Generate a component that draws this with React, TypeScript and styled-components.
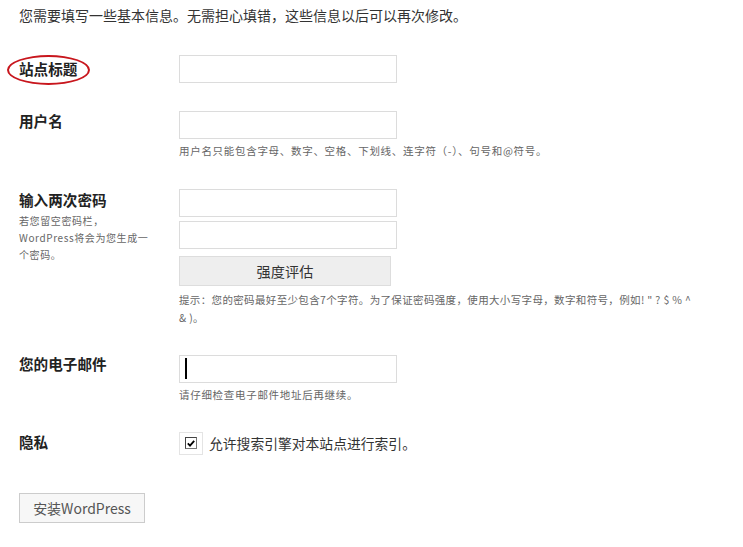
import styled, { createGlobalStyle } from 'styled-components';

const GlobalStyle = createGlobalStyle`
  html, body {
    margin: 0;
    padding: 0;
    background: #fff;
  }
  body {
    font-family: 'Noto Sans CJK SC', 'Noto Sans', sans-serif;
    color: #333;
  }
`;

const Page = styled.div`
  padding: 5px 0 0 19px;
  width: 724px;
`;

const Intro = styled.p`
  margin: 0;
  font-size: 14px;
  line-height: 20px;
  color: #333;
`;

const Form = styled.div`
  margin-top: 30px;
  display: flex;
  flex-direction: column;
`;

const Row = styled.div<{ gap: number }>`
  display: grid;
  grid-template-columns: 160px 1fr;
  margin-bottom: ${(props) => props.gap}px;
`;

const LabelCell = styled.div`
  position: relative;
  display: flex;
  flex-direction: column;
`;

const Label = styled.label<{ top: number }>`
  font-size: 14.6px;
  font-weight: 700;
  line-height: 20px;
  color: #222;
  padding-top: ${(props) => props.top}px;
`;

const Circled = styled.span`
  position: absolute;
  left: -12px;
  top: 0;
  width: 79px;
  height: 26px;
  border: 2px solid #c8161d;
  border-radius: 50%;
`;

const Note = styled.div`
  font-size: 10px;
  line-height: 17px;
  color: #666;
  letter-spacing: 0.6px;
  width: 135px;
  margin-top: 2px;
`;

const Field = styled.div`
  display: flex;
  flex-direction: column;
  align-items: flex-start;
`;

const InputWrap = styled.div`
  position: relative;
`;

const TextInput = styled.input<{ spaced?: boolean }>`
  box-sizing: border-box;
  width: 218px;
  height: 28px;
  border: 1px solid #dcdcdc;
  background: #fff;
  outline: none;
  margin: 0 0 ${(props) => (props.spaced ? 4 : 0)}px 0;
  padding: 0 6px;
`;

const Caret = styled.span`
  position: absolute;
  left: 6px;
  top: 4px;
  width: 2px;
  height: 21px;
  background: #000;
`;

const StrengthButton = styled.div`
  box-sizing: border-box;
  width: 212px;
  height: 30px;
  margin-top: 3px;
  background: #eee;
  border: 1px solid #ddd;
  display: flex;
  align-items: center;
  justify-content: center;
  font-size: 14.2px;
  color: #333;
`;

const Hint = styled.p<{ top: number; spacing?: number }>`
  margin: ${(props) => props.top}px 0 0 0;
  font-size: 10.5px;
  line-height: 18px;
  color: #666;
  letter-spacing: ${(props) => props.spacing ?? 0.7}px;
`;

const CheckRow = styled.div`
  display: flex;
  align-items: center;
  gap: 6px;
  height: 23px;
`;

const CheckFrame = styled.div`
  box-sizing: border-box;
  width: 24px;
  height: 23px;
  border: 1px solid #e4e4e4;
  display: flex;
  align-items: center;
  justify-content: center;
`;

const CheckBox = styled.div`
  box-sizing: border-box;
  width: 12px;
  height: 12px;
  border: 1px solid #777;
  border-top-color: #444;
  border-left-color: #444;
  background: #fff;
  display: flex;
  align-items: center;
  justify-content: center;
`;

const CheckText = styled.span`
  font-size: 13.8px;
  color: #333;
`;

const InstallButton = styled.div`
  box-sizing: border-box;
  width: 126px;
  height: 30px;
  background: #f7f7f7;
  border: 1px solid #ccc;
  display: flex;
  align-items: center;
  justify-content: center;
  font-size: 14px;
  color: #555;
`;

export default function App() {
  return (
    <>
      <GlobalStyle />
      <Page>
        <Intro>您需要填写一些基本信息。无需担心填错，这些信息以后可以再次修改。</Intro>
        <Form>
          <Row gap={28}>
            <LabelCell>
              <Circled />
              <Label top={4}>站点标题</Label>
            </LabelCell>
            <Field>
              <TextInput />
            </Field>
          </Row>
          <Row gap={29}>
            <LabelCell>
              <Label top={0}>用户名</Label>
            </LabelCell>
            <Field>
              <TextInput />
              <Hint top={3}>用户名只能包含字母、数字、空格、下划线、连字符（-）、句号和@符号。</Hint>
            </Field>
          </Row>
          <Row gap={27}>
            <LabelCell>
              <Label top={1}>输入两次密码</Label>
              <Note>若您留空密码栏，WordPress将会为您生成一个密码。</Note>
            </LabelCell>
            <Field>
              <TextInput spaced />
              <TextInput spaced />
              <StrengthButton>强度评估</StrengthButton>
              <Hint top={5} spacing={0.35}>
                提示：您的密码最好至少包含7个字符。为了保证密码强度，使用大小写字母，数字和符号，例如! &quot; ? $ % ^
                <br />
                &amp; )。
              </Hint>
            </Field>
          </Row>
          <Row gap={28}>
            <LabelCell>
              <Label top={0}>您的电子邮件</Label>
            </LabelCell>
            <Field>
              <InputWrap>
                <TextInput />
                <Caret />
              </InputWrap>
              <Hint top={3}>请仔细检查电子邮件地址后再继续。</Hint>
            </Field>
          </Row>
          <Row gap={38}>
            <LabelCell>
              <Label top={0}>隐私</Label>
            </LabelCell>
            <Field>
              <CheckRow>
                <CheckFrame>
                  <CheckBox>
                    <svg width="8" height="7" viewBox="0 0 8 7">
                      <path d="M0.8 3.4 L3 5.6 L7.2 0.8" fill="none" stroke="#000" strokeWidth="1.8" />
                    </svg>
                  </CheckBox>
                </CheckFrame>
                <CheckText>允许搜索引擎对本站点进行索引。</CheckText>
              </CheckRow>
            </Field>
          </Row>
          <div>
            <InstallButton>安装WordPress</InstallButton>
          </div>
        </Form>
      </Page>
    </>
  );
}
